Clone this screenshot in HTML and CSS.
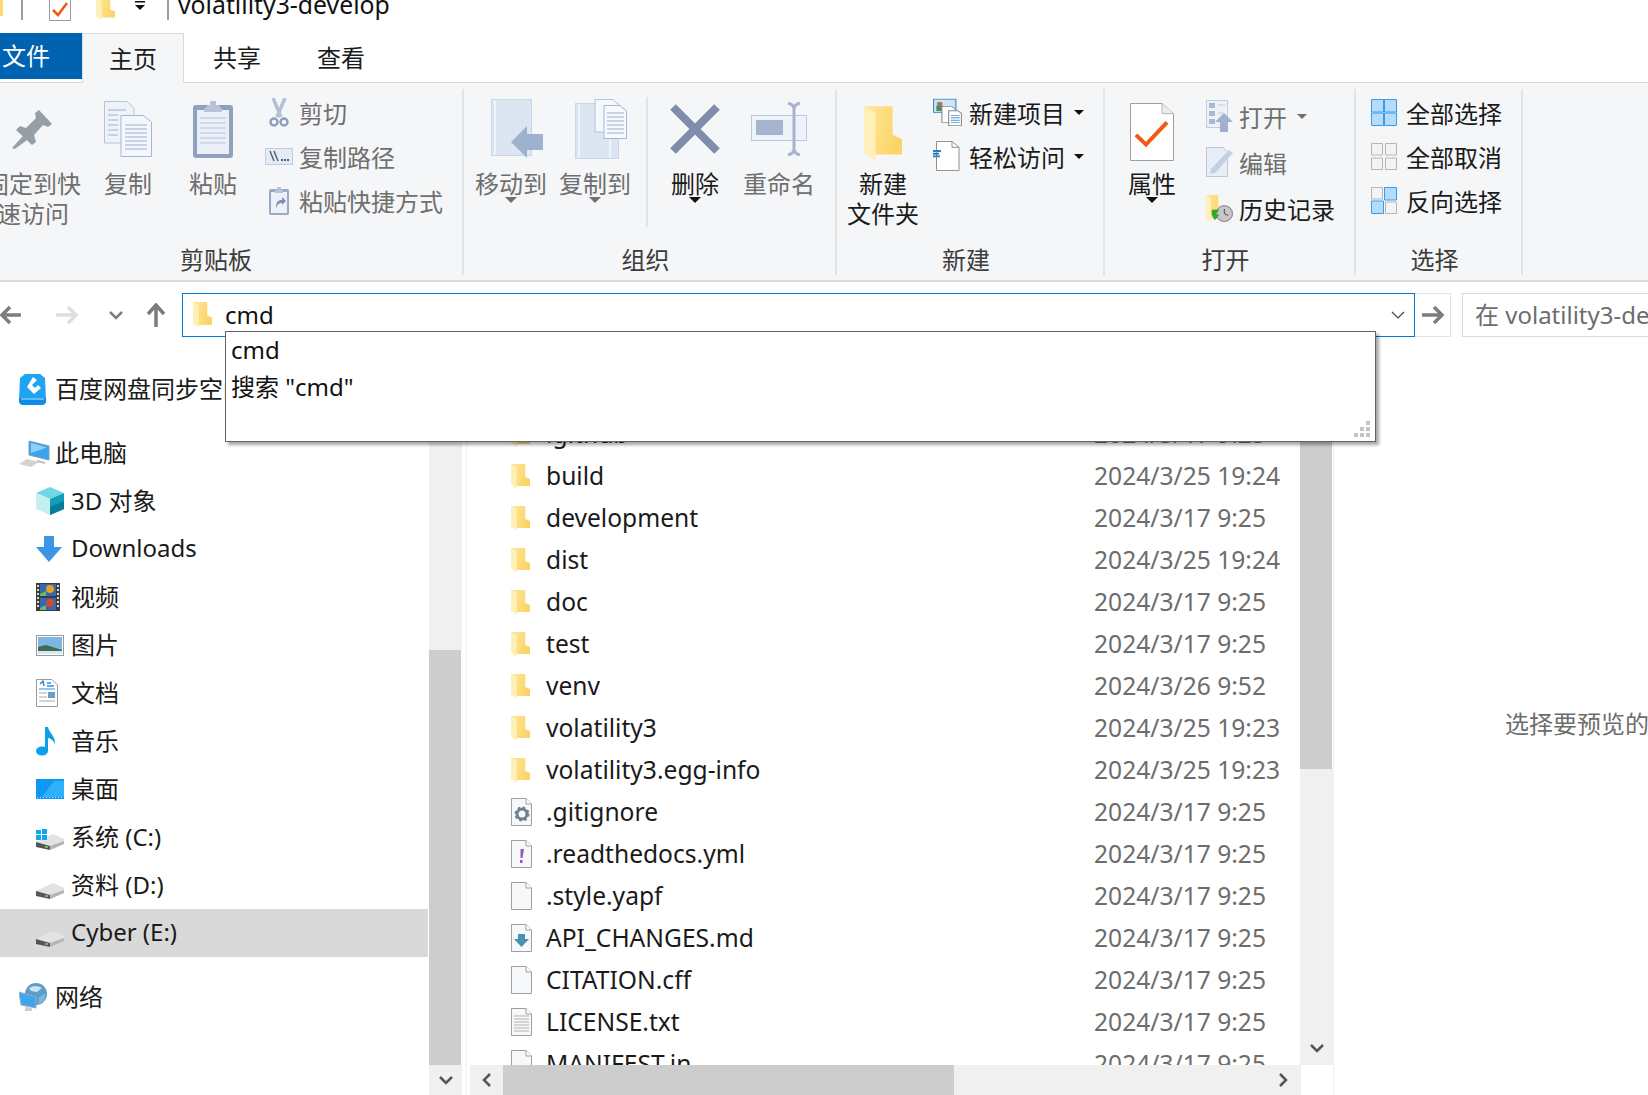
FILE: index.html
```html
<!DOCTYPE html>
<html lang="zh-CN">
<head>
<meta charset="utf-8">
<title>volatility3-develop</title>
<link rel="stylesheet" href="styles.css">
</head>
<body>
<svg class="defs" aria-hidden="true">
  <defs>
    <linearGradient id="fy" x1="0" y1="0" x2="1" y2="0.3"><stop offset="0" stop-color="#ffe89c"/><stop offset="1" stop-color="#fbd467"/></linearGradient>
    <symbol id="folder" viewBox="0 0 20 26" preserveAspectRatio="none">
      <path d="M0 1H15V14L20 16V23H5Z" fill="url(#fy)"/>
      <path d="M0 1L6 4V26L0 22Z" fill="#fff0ba"/>
    </symbol>
    <symbol id="page" viewBox="0 0 21 28">
      <path d="M.5.5H15L20.500 6V27.500H.5Z" fill="#f6f8fa" stroke="#a0a0a0"/>
      <path d="M15 .5V6H20.500" fill="#fff" stroke="#a0a0a0"/>
    </symbol>
    <symbol id="drive" viewBox="0 0 28 16">
      <path d="M0 8L17 0L28 5V10L14 16L0 12Z" fill="#e3e3e3"/>
      <path d="M0 8L14 12V16L0 13Z" fill="#555"/>
      <path d="M14 12L28 7V10L14 16Z" fill="#b5b5b5"/>
      <rect x="9" y="12" width="3" height="2" fill="#5fc25f"/>
    </symbol>
  </defs>
</svg>

<div class="app">
  <div class="titlebar">
    <span class="tb-stub"></span>
    <span class="tb-sep tb-sep-a"></span>
    <svg class="tb-check" width="22" height="21" viewBox="0 0 22 21"><path d="M.5-2H21.500V20.500H.5Z" fill="#fff" stroke="#9a9a9a"/><path d="M4 10L9 15L18 3" fill="none" stroke="#ef5a1c" stroke-width="2.500"/></svg>
    <svg class="tb-folder" width="19" height="22"><use href="#folder" width="19" height="22"/></svg>
    <svg class="tb-caret" width="16" height="12" viewBox="0 0 16 12"><rect x="2" y="1" width="10" height="1.500" fill="#111"/><path d="M2 5H12L7 10Z" fill="#111"/></svg>
    <span class="tb-sep tb-sep-b"></span>
    <span class="tb-title">volatility3-develop</span>
  </div>

  <div class="tabs">
    <div class="tab-file">文件</div>
    <div class="tab tab-active">主页</div>
    <div class="tab tab-share">共享</div>
    <div class="tab tab-view">查看</div>
  </div>

  <div class="ribbon">
    <section class="group group-clip">
      <div class="group-body">
        <div class="big big-pin dim">
          <div class="big-icon">
            <svg width="42" height="42" viewBox="0 0 42 42"><path d="M27 2L40 16L36 19L31 17L22 27L24 34L20 37L4 22L8 18L14 20L24 10L23 5Z" fill="#95a0a6"/><path d="M11 28L15 32L3 41L0 40Z" fill="#95a0a6"/></svg>
          </div>
          <div class="big-label">固定到快<br>速访问</div>
        </div>
        <div class="big big-copy dim">
          <div class="big-icon">
            <svg width="48" height="56" viewBox="0 0 48 56"><path d="M.5.500H23L30 7V42H.5Z" fill="#eef2f9" stroke="#b4c2da"/><path d="M17 14.500H39L47.500 21V55.500H17Z" fill="#f4f7fc" stroke="#a5b6d2"/><path d="M4 9H22M4 14H14M4 19H14M4 24H14M4 29H14M4 34H14M21 24H43M21 28H43M21 32H43M21 36H43M21 40H43M21 44H43M21 48H43" stroke="#b9c6dd" stroke-width="1.500"/></svg>
          </div>
          <div class="big-label">复制</div>
        </div>
        <div class="big big-paste dim">
          <div class="big-icon">
            <svg width="40" height="58" viewBox="0 0 40 58"><rect y="5" width="40" height="53" rx="3" fill="#8fa1bf"/><rect x="4" y="10" width="32" height="44" fill="#eaeff8"/><path d="M7 18H33M7 23H33M7 28H33M7 33H33M7 38H33M7 43H33" stroke="#c9d4e6" stroke-width="1.500"/><path d="M11 9L15 5H17V1H23V5H25L29 9V12H11Z" fill="#b7c3d7"/></svg>
          </div>
          <div class="big-label">粘贴</div>
        </div>
        <div class="stack stack-clip dim">
          <div class="small">
            <span class="small-icon"><svg width="20" height="29" viewBox="0 0 20 29"><path d="M4 0L12 19M16 0L8 19" stroke="#b3c0d4" stroke-width="3.500"/><circle cx="5" cy="24" r="3.500" fill="none" stroke="#8d9fbd" stroke-width="2.500"/><circle cx="15" cy="24" r="3.500" fill="none" stroke="#8d9fbd" stroke-width="2.500"/></svg></span>
            <span>剪切</span>
          </div>
          <div class="small">
            <span class="small-icon"><svg width="28" height="17" viewBox="0 0 28 17"><rect x=".5" y=".5" width="27" height="16" fill="#e3ebf6" stroke="#c0cde0"/><path d="M5 3L9 13M9 3L13 13" stroke="#55637a" stroke-width="1.500"/><path d="M16 12H24" stroke="#55637a" stroke-width="2" stroke-dasharray="2 1"/></svg></span>
            <span>复制路径</span>
          </div>
          <div class="small">
            <span class="small-icon"><svg width="20" height="29" viewBox="0 0 20 29"><rect y="3" width="20" height="26" rx="2" fill="#9aaac5"/><rect x="2" y="6" width="16" height="21" fill="#edf1f8"/><path d="M6 5L8 3V1H12V3L14 5V7H6Z" fill="#b7c3d7"/><path d="M7 22C7 16 9 14 13 14V11L17 15L13 19V17C10 17 9 18 7 22Z" fill="#7b90b3"/></svg></span>
            <span>粘贴快捷方式</span>
          </div>
        </div>
      </div>
      <div class="group-label group-label-clip">剪贴板</div>
    </section>

    <section class="group group-org">
      <div class="group-body">
        <div class="big big-w3 dim">
          <div class="big-icon big-icon-shift">
            <svg width="52" height="60" viewBox="0 0 52 60"><rect x=".5" y=".5" width="40" height="56" fill="#dce6f3" stroke="#c8d6e9"/><path d="M4 1V56" stroke="#eef3fa" stroke-width="2"/><path d="M20 43L36 27V35H52V51H36V59Z" fill="#9fb1cc"/></svg>
          </div>
          <div class="big-label">移动到</div>
          <span class="caret caret-dim"></span>
        </div>
        <div class="big big-w3 big-copyto dim">
          <div class="big-icon big-icon-shift">
            <svg width="52" height="60" viewBox="0 0 52 60"><rect x=".5" y="4.500" width="43" height="55" fill="#dce6f3" stroke="#c8d6e9"/><path d="M4 5V59M35 33V59" stroke="#eef3fa" stroke-width="2"/><path d="M20 .5H38L44 6V33H20Z" fill="#f4f7fc" stroke="#b4c2da"/><path d="M29 6.500H45L51.500 12V39.500H29Z" fill="#f7f9fd" stroke="#a5b6d2"/><path d="M32 14H49M32 18H49M32 22H49M32 26H49M32 30H49M32 34H49" stroke="#b9c6dd" stroke-width="1.500"/></svg>
          </div>
          <div class="big-label">复制到</div>
          <span class="caret caret-dim"></span>
        </div>
        <span class="vsep"></span>
        <div class="big big-del">
          <div class="big-icon">
            <svg width="50" height="50" viewBox="0 0 50 50"><path d="M3 3L47 47M47 3L3 47" stroke="#7f8daa" stroke-width="8"/></svg>
          </div>
          <div class="big-label">删除</div>
          <span class="caret"></span>
        </div>
        <div class="big big-w3 big-rename dim">
          <div class="big-icon">
            <svg width="56" height="54" viewBox="0 0 56 54"><rect x=".5" y="13.500" width="55" height="25" fill="#eef2fa" stroke="#b9c8de"/><rect x="5" y="18" width="27" height="15" fill="#a6b5cf"/><path d="M37 1C41 2 43 4 43 7V47C43 50 41 52 37 53M49 1C45 2 43 4 43 7M43 47C43 50 45 52 49 53" fill="none" stroke="#a6b5cf" stroke-width="3"/></svg>
          </div>
          <div class="big-label">重命名</div>
        </div>
      </div>
      <div class="group-label">组织</div>
    </section>

    <section class="group group-new">
      <div class="group-body">
        <div class="big big-w3 big-newf">
          <div class="big-icon big-icon-top">
            <svg width="38" height="57"><use href="#folder" width="38" height="57"/></svg>
          </div>
          <div class="big-label">新建<br>文件夹</div>
        </div>
        <div class="stack stack-new">
          <div class="small">
            <span class="small-icon"><svg width="29" height="28" viewBox="0 0 26 34" preserveAspectRatio="none"><rect x=".5" y="1.500" width="20" height="16" fill="#cfe4f7" stroke="#3f88c5"/><circle cx="6" cy="7" r="2.500" fill="#a8795a"/><rect x="3" y="9" width="6" height="7" fill="#4d8a5f"/><path d="M8 10.500H17L20 13V29.500H8Z" fill="#fff" stroke="#8d8d8d"/><path d="M14 15.500H22L25.500 18.500V33.500H14Z" fill="#fff" stroke="#8d8d8d"/><path d="M16 21H24M16 24H24M16 27H24M16 30H24" stroke="#4a90d9"/></svg></span>
            <span>新建项目</span><span class="caret-inline"></span>
          </div>
          <div class="small">
            <span class="small-icon"><svg width="27" height="30" viewBox="0 0 27 33" preserveAspectRatio="none"><path d="M3.500.500H19L26 7V32.500H3.500Z" fill="#fff" stroke="#8a8a8a"/><path d="M19 .5V7H26" fill="none" stroke="#8a8a8a"/><path d="M0 11H8M0 14H6M0 17H7" stroke="#2c7cc4" stroke-width="2"/></svg></span>
            <span>轻松访问</span><span class="caret-inline"></span>
          </div>
        </div>
      </div>
      <div class="group-label">新建</div>
    </section>

    <section class="group group-open">
      <div class="group-body">
        <div class="big big-prop">
          <div class="big-icon big-icon-prop">
            <svg width="44" height="58" viewBox="0 0 44 60" preserveAspectRatio="none"><path d="M.5.500H32L43.500 11V59.500H.5Z" fill="#fff" stroke="#9d9d9d"/><path d="M32 .5V11H43.500" fill="#eee" stroke="#b5b5b5"/><path d="M6 33L16 43L37 20" fill="none" stroke="#f05a14" stroke-width="4"/></svg>
          </div>
          <div class="big-label">属性</div>
          <span class="caret"></span>
        </div>
        <div class="stack stack-open">
          <div class="small dim">
            <span class="small-icon"><svg width="27" height="32" viewBox="0 0 27 32"><rect x=".5" y=".5" width="21" height="27" fill="#edf1f8" stroke="#c0cde0"/><rect x="3" y="3" width="6" height="5" fill="#a9b8d0"/><rect x="3" y="11" width="6" height="5" fill="#a9b8d0"/><rect x="3" y="19" width="6" height="5" fill="#a9b8d0"/><path d="M12 5H19M12 13H17" stroke="#c0cde0"/><path d="M18 13L27 22H22V32H14V22H9Z" fill="#9fb1cc"/></svg></span>
            <span>打开</span><span class="caret-inline caret-inline-dim"></span>
          </div>
          <div class="small dim">
            <span class="small-icon"><svg width="27" height="30" viewBox="0 0 27 30"><path d="M.5.500H17L21.500 5V29.500H.5Z" fill="#e8eef8" stroke="#b9c8de"/><path d="M23 3L27 6L9 26L4 27L5 22Z" fill="#c3cfe2"/></svg></span>
            <span>编辑</span>
          </div>
          <div class="small">
            <span class="small-icon"><svg width="27" height="28" viewBox="0 0 28 30" preserveAspectRatio="none"><use href="#folder" width="17" height="30"/><circle cx="19" cy="21" r="8.500" fill="#c7c7c7" stroke="#777"/><path d="M19 16V21L23 23" fill="none" stroke="#444"/><path d="M6 17L14 17L10 22H14L9 28L6 22Z" fill="#2fa62f"/></svg></span>
            <span>历史记录</span>
          </div>
        </div>
      </div>
      <div class="group-label">打开</div>
    </section>

    <section class="group group-sel">
      <div class="group-body">
        <div class="stack stack-sel">
          <div class="small">
            <span class="small-icon"><svg width="26" height="27" viewBox="0 0 26 27"><path d="M.5.500H12.500V13H.5ZM13.500.500H25.500V13H13.500ZM.5 14H12.500V26.500H.5ZM13.500 14H25.500V26.500H13.500Z" fill="#b6dcfb" stroke="#3a9bea"/></svg></span>
            <span>全部选择</span>
          </div>
          <div class="small">
            <span class="small-icon"><svg width="26" height="27" viewBox="0 0 26 27"><path d="M.5.500H11.500V12H.5ZM14.500.500H25.500V12H14.500ZM.5 15H11.500V26.500H.5ZM14.500 15H25.500V26.500H14.500Z" fill="#f2f3f4" stroke="#b5b5b5"/></svg></span>
            <span>全部取消</span>
          </div>
          <div class="small">
            <span class="small-icon"><svg width="26" height="27" viewBox="0 0 26 27"><path d="M.5.500H11.500V12H.5ZM14.500 15H25.500V26.500H14.500Z" fill="#f2f3f4" stroke="#b5b5b5"/><path d="M13.500.500H25.500V13H13.500ZM.5 14H12.500V26.500H.5Z" fill="#b6dcfb" stroke="#3a9bea"/></svg></span>
            <span>反向选择</span>
          </div>
        </div>
      </div>
      <div class="group-label">选择</div>
    </section>
  </div>

  <div class="addr">
    <svg class="ab-back" width="22" height="22" viewBox="0 0 22 22"><path d="M10 3L2 11L10 19M2 11H21" fill="none" stroke="#7d7d7d" stroke-width="3.500"/></svg>
    <svg class="ab-fwd" width="24" height="22" viewBox="0 0 24 22"><path d="M13 3L21 11L13 19M21 11H1" fill="none" stroke="#dedede" stroke-width="3.500"/></svg>
    <svg class="ab-down" width="14" height="10" viewBox="0 0 14 10"><path d="M1 2L7 8L13 2" fill="none" stroke="#7d7d7d" stroke-width="2.500"/></svg>
    <svg class="ab-up" width="20" height="24" viewBox="0 0 20 24"><path d="M2 11L10 2L18 11M10 2V24" fill="none" stroke="#7d7d7d" stroke-width="3.500"/></svg>
    <div class="addr-box">
      <svg class="addr-folder" width="19" height="27"><use href="#folder" width="19" height="27"/></svg>
      <span class="addr-text">cmd</span>
      <svg class="addr-chev" width="14" height="8" viewBox="0 0 14 8"><path d="M1 1L7 7L13 1" fill="none" stroke="#444" stroke-width="1.200"/></svg>
    </div>
    <div class="addr-go">
      <svg width="24" height="20" viewBox="0 0 24 20"><path d="M13 2L21 10L13 18M21 10H1" fill="none" stroke="#7d7d7d" stroke-width="3.500"/></svg>
    </div>
    <div class="search">在 volatility3-develop 中搜索</div>
  </div>

  <div class="main">
    <nav class="nav">
      <div class="nav-row nav-root">
        <span class="nav-icon"><svg width="27" height="31" viewBox="0 0 27 31"><path d="M6 0H21L26 4L27 26Q27 31 22 31H5Q0 31 0 26L1 4Z" fill="#1fa4f4"/><path d="M0 24H27V27Q27 31 22 31H5Q0 31 0 27Z" fill="#0d8de6"/><path d="M2 25H25" stroke="#bfe6ff"/><path d="M14 3L18 6L13 11L16 14L19 11L22 14L15 20L8 13Z" fill="#fff"/></svg></span>
        <span class="nav-text">百度网盘同步空间</span>
      </div>
      <div class="nav-row nav-root nav-gap">
        <span class="nav-icon"><svg width="31" height="27" viewBox="0 0 31 27"><path d="M10 1L30 6V20L10 15Z" fill="#39a4ee" stroke="#7f9fb5"/><path d="M12 3L28 7.500L12 13Z" fill="#8fd0fa"/><path d="M18 20L26 22V24L18 22Z" fill="#bbb"/><path d="M0 24L8 19L20 22L12 27Z" fill="#d3d3d3"/></svg></span>
        <span class="nav-text">此电脑</span>
      </div>
      <div class="nav-row nav-child">
        <span class="nav-icon"><svg width="28" height="28" viewBox="0 0 28 28"><path d="M14 0L28 6L14 12L0 6Z" fill="#6fd8e4"/><path d="M0 6L14 12V28L0 22Z" fill="#c5f0ef"/><path d="M14 12L28 6V22L14 28Z" fill="#129dbb"/><path d="M14 20L28 14V22L14 28Z" fill="#0b7c98"/></svg></span>
        <span class="nav-text">3D 对象</span>
      </div>
      <div class="nav-row nav-child">
        <span class="nav-icon"><svg width="26" height="26" viewBox="0 0 26 26"><path d="M8 0H18V11H26L13 26L0 11H8Z" fill="#3b97e6"/></svg></span>
        <span class="nav-text">Downloads</span>
      </div>
      <div class="nav-row nav-child">
        <span class="nav-icon"><svg width="24" height="28" viewBox="0 0 24 28"><rect width="24" height="28" fill="#3c3c3c"/><rect x="4" y="1" width="16" height="12" fill="#3268b5"/><rect x="4" y="15" width="16" height="12" fill="#3268b5"/><circle cx="14" cy="6" r="4" fill="#e9a11f"/><circle cx="14" cy="20" r="4" fill="#d9482b"/><path d="M4 11L10 8V13H4ZM4 25L10 22V27H4Z" fill="#6dbb5a"/><path d="M1 3H3M1 7H3M1 11H3M1 15H3M1 19H3M1 23H3M21 3H23M21 7H23M21 11H23M21 15H23M21 19H23M21 23H23" stroke="#ddd" stroke-width="2"/></svg></span>
        <span class="nav-text">视频</span>
      </div>
      <div class="nav-row nav-child">
        <span class="nav-icon"><svg width="28" height="21" viewBox="0 0 28 21"><rect x=".5" y=".5" width="27" height="20" fill="#fff" stroke="#9a9a9a"/><rect x="2" y="2" width="24" height="17" fill="#7bb7e2"/><path d="M2 12L10 10L26 15V19H2Z" fill="#3f6b52"/><path d="M2 16H26V19H2Z" fill="#d6eaf5"/></svg></span>
        <span class="nav-text">图片</span>
      </div>
      <div class="nav-row nav-child">
        <span class="nav-icon"><svg width="22" height="28" viewBox="0 0 22 28"><path d="M.5.500H16L21.500 6V27.500H.5Z" fill="#fff" stroke="#9a9a9a"/><path d="M4 5L7 2L8 7M11 4H15M11 7H18" fill="none" stroke="#2c8fe0" stroke-width="1.500"/><path d="M3 10H19" stroke="#2c8fe0"/><path d="M3 14H11M3 18H11M3 22H19" stroke="#aaa"/><rect x="12" y="13" width="7" height="6" fill="#6ba0c4"/></svg></span>
        <span class="nav-text">文档</span>
      </div>
      <div class="nav-row nav-child">
        <span class="nav-icon"><svg width="20" height="29" viewBox="0 0 20 29"><ellipse cx="6" cy="24" rx="6" ry="4.500" fill="#0aa0ea"/><path d="M9 0H12C13 6 20 9 19 18C18.500 14 15 11.500 12 11V24H9Z" fill="#0aa0ea"/></svg></span>
        <span class="nav-text">音乐</span>
      </div>
      <div class="nav-row nav-child">
        <span class="nav-icon"><svg width="28" height="20" viewBox="0 0 28 20"><rect width="28" height="20" fill="#0f97f5"/><path d="M6 18L18 2H28V18Z" fill="#2fb0fb"/><path d="M1 18.500H27" stroke="#cdeaff" stroke-dasharray="1 2"/></svg></span>
        <span class="nav-text">桌面</span>
      </div>
      <div class="nav-row nav-child">
        <span class="nav-icon nav-icon-c">
          <svg width="28" height="21" viewBox="0 0 28 21"><use href="#drive" y="5" width="28" height="16"/><path d="M0 1H5V5H0ZM6 0H11V5H6ZM0 6H5V11H0ZM6 6H11V11H6Z" fill="#0fa8ee"/></svg>
        </span>
        <span class="nav-text">系统 (C:)</span>
      </div>
      <div class="nav-row nav-child">
        <span class="nav-icon nav-icon-d"><svg width="28" height="16"><use href="#drive" width="28" height="16"/></svg></span>
        <span class="nav-text">资料 (D:)</span>
      </div>
      <div class="nav-row nav-child nav-selected">
        <span class="nav-icon nav-icon-d"><svg width="28" height="16"><use href="#drive" width="28" height="16"/></svg></span>
        <span class="nav-text">Cyber (E:)</span>
      </div>
      <div class="nav-row nav-root nav-gap">
        <span class="nav-icon"><svg width="28" height="28" viewBox="0 0 28 28"><circle cx="17" cy="11" r="11" fill="#5a9ccc"/><path d="M10 5Q17 1 23 5L18 9L12 8Z" fill="#cfe4f2"/><path d="M20 14L27 10L25 18L19 21Z" fill="#7fb6dc"/><path d="M0 9L17 14V25L2 22Z" fill="#3da7ee" stroke="#9ab"/><path d="M6 24L13 25V28H6Z" fill="#ccc"/></svg></span>
        <span class="nav-text">网络</span>
      </div>
    </nav>

    <div class="vbar vbar-nav">
      <div class="vbar-track vbar-track-nav"></div>
      <div class="vbar-thumb"></div>
      <div class="vbar-btn"><svg width="14" height="9" viewBox="0 0 14 9"><path d="M1 1L7 7L13 1" fill="none" stroke="#555" stroke-width="2.500"/></svg></div>
    </div>

    <div class="split"></div>

    <div class="content">
      <div class="content-top">
        <div class="list">
          <div class="row"><span class="r-icon"><svg width="19" height="26"><use href="#folder" width="19" height="26"/></svg></span><span class="r-name">.github</span><span class="r-date">2024/3/17 9:25</span></div>
          <div class="row"><span class="r-icon"><svg width="19" height="26"><use href="#folder" width="19" height="26"/></svg></span><span class="r-name">build</span><span class="r-date">2024/3/25 19:24</span></div>
          <div class="row"><span class="r-icon"><svg width="19" height="26"><use href="#folder" width="19" height="26"/></svg></span><span class="r-name">development</span><span class="r-date">2024/3/17 9:25</span></div>
          <div class="row"><span class="r-icon"><svg width="19" height="26"><use href="#folder" width="19" height="26"/></svg></span><span class="r-name">dist</span><span class="r-date">2024/3/25 19:24</span></div>
          <div class="row"><span class="r-icon"><svg width="19" height="26"><use href="#folder" width="19" height="26"/></svg></span><span class="r-name">doc</span><span class="r-date">2024/3/17 9:25</span></div>
          <div class="row"><span class="r-icon"><svg width="19" height="26"><use href="#folder" width="19" height="26"/></svg></span><span class="r-name">test</span><span class="r-date">2024/3/17 9:25</span></div>
          <div class="row"><span class="r-icon"><svg width="19" height="26"><use href="#folder" width="19" height="26"/></svg></span><span class="r-name">venv</span><span class="r-date">2024/3/26 9:52</span></div>
          <div class="row"><span class="r-icon"><svg width="19" height="26"><use href="#folder" width="19" height="26"/></svg></span><span class="r-name">volatility3</span><span class="r-date">2024/3/25 19:23</span></div>
          <div class="row"><span class="r-icon"><svg width="19" height="26"><use href="#folder" width="19" height="26"/></svg></span><span class="r-name">volatility3.egg-info</span><span class="r-date">2024/3/25 19:23</span></div>
          <div class="row"><span class="r-icon"><svg width="21" height="28" viewBox="0 0 21 28"><use href="#page" width="21" height="28"/><circle cx="11" cy="16" r="5" fill="none" stroke="#6d808c" stroke-width="3"/><circle cx="11" cy="16" r="6.500" fill="none" stroke="#6d808c" stroke-width="2" stroke-dasharray="2.500 2.600"/></svg></span><span class="r-name">.gitignore</span><span class="r-date">2024/3/17 9:25</span></div>
          <div class="row"><span class="r-icon"><svg width="21" height="28" viewBox="0 0 21 28"><use href="#page" width="21" height="28"/><path d="M9.500 9H13L11.500 18H9.500ZM9 20H11.500V23H9Z" fill="#8f5bb5"/></svg></span><span class="r-name">.readthedocs.yml</span><span class="r-date">2024/3/17 9:25</span></div>
          <div class="row"><span class="r-icon"><svg width="21" height="28"><use href="#page" width="21" height="28"/></svg></span><span class="r-name">.style.yapf</span><span class="r-date">2024/3/17 9:25</span></div>
          <div class="row"><span class="r-icon"><svg width="21" height="28" viewBox="0 0 21 28"><use href="#page" width="21" height="28"/><path d="M7 10H14V15H18L10.500 23L3 15H7Z" fill="#4a90b5"/></svg></span><span class="r-name">API_CHANGES.md</span><span class="r-date">2024/3/17 9:25</span></div>
          <div class="row"><span class="r-icon"><svg width="21" height="28"><use href="#page" width="21" height="28"/></svg></span><span class="r-name">CITATION.cff</span><span class="r-date">2024/3/17 9:25</span></div>
          <div class="row"><span class="r-icon"><svg width="21" height="28" viewBox="0 0 21 28"><use href="#page" width="21" height="28"/><path d="M3 8H18M3 11H18M3 14H18M3 17H18M3 20H18M3 23H18" stroke="#b0b0b0"/></svg></span><span class="r-name">LICENSE.txt</span><span class="r-date">2024/3/17 9:25</span></div>
          <div class="row"><span class="r-icon"><svg width="21" height="28"><use href="#page" width="21" height="28"/></svg></span><span class="r-name">MANIFEST.in</span><span class="r-date">2024/3/17 9:25</span></div>
        </div>
        <div class="vbar vbar-list">
          <div class="vbar-thumb vbar-thumb-list"></div>
          <div class="vbar-track"></div>
          <div class="vbar-btn vbar-btn-list"><svg width="14" height="9" viewBox="0 0 14 9"><path d="M1 1L7 7L13 1" fill="none" stroke="#555" stroke-width="2.500"/></svg></div>
        </div>
      </div>
      <div class="hbar">
        <div class="hbar-btn"><svg width="9" height="14" viewBox="0 0 9 14"><path d="M8 1L2 7L8 13" fill="none" stroke="#555" stroke-width="2.500"/></svg></div>
        <div class="hbar-thumb"></div>
        <div class="hbar-track"></div>
        <div class="hbar-btn hbar-btn-right"><svg width="9" height="14" viewBox="0 0 9 14"><path d="M1 1L7 7L1 13" fill="none" stroke="#555" stroke-width="2.500"/></svg></div>
      </div>
    </div>

    <div class="preview">
      <p class="preview-text">选择要预览的文件。</p>
    </div>
  </div>

  <div class="popup">
    <div class="popup-row">cmd</div>
    <div class="popup-row">搜索 "cmd"</div>
    <svg class="grip" width="17" height="16" viewBox="0 0 17 16"><path d="M12 0H16V4H12ZM6 6H10V10H6ZM12 6H16V10H12ZM0 12H4V16H0ZM6 12H10V16H6ZM12 12H16V16H12Z" fill="#c4c4c4"/></svg>
  </div>
</div>
</body>
</html>
```

FILE: styles.css
```css
* { box-sizing: border-box; }
html, body { margin: 0; padding: 0; background: #fff; }
body { font-family: "Noto Sans", "Noto Sans CJK SC", sans-serif; font-size: 24px; color: #1a1a1a; }
.defs { position: absolute; width: 0; height: 0; }
svg { display: block; flex: none; }

.app { position: relative; width: 1648px; height: 1095px; overflow: hidden; display: flex; flex-direction: column; }

/* title bar */
.titlebar { height: 33px; flex: none; display: flex; align-items: flex-start; overflow: hidden; }
.tb-stub { width: 3px; height: 16px; background: #fcd870; }
.tb-sep { width: 2px; height: 20px; background: #9d9d9d; }
.tb-sep-a { margin-left: 18px; }
.tb-check { margin-left: 26px; }
.tb-folder { margin-left: 25px; margin-top: -2px; }
.tb-caret { margin-left: 18px; }
.tb-sep-b { margin-left: 18px; }
.tb-title { margin-left: 9px; font-size: 24.800px; line-height: 24px; margin-top: -8px; color: #111; white-space: nowrap; }

/* tabs */
.tabs { height: 50px; flex: none; display: flex; align-items: flex-start; border-bottom: 1px solid #dadbdc; }
.tab-file { width: 82px; height: 46px; background: #0063b1; color: #fff; padding-left: 2px; line-height: 46px; }
.tab { height: 50px; line-height: 50px; }
.tab-active { width: 102px; text-align: center; background: #f5f6f7; border: 1px solid #dadbdc; border-bottom: 0; }
.tab-share { margin-left: 29px; }
.tab-view { margin-left: 56px; }

/* ribbon */
.ribbon { height: 199px; flex: none; display: flex; padding-top: 6px; background: #f5f6f7; border-bottom: 2px solid #dadbdc; }
.group { height: 186px; flex: none; display: flex; flex-direction: column; border-right: 2px solid #e2e3e4; }
.group-clip { width: 484px; margin-left: -20px; }
.group-org { width: 373px; }
.group-new { width: 268px; }
.group-open { width: 251px; }
.group-sel { width: 167px; }
.group-body { height: 155px; flex: none; display: flex; }
.group-label { height: 31px; line-height: 31px; text-align: center; padding-right: 8px; color: #3c3c3c; }
.group-label-clip { padding-right: 10px; }

.big { flex: none; display: flex; flex-direction: column; align-items: center; }
.big-icon { height: 80px; flex: none; display: flex; align-items: center; justify-content: center; }
.big-icon-top { align-items: flex-start; padding-top: 15px; }
.big-icon-prop { padding-top: 5px; }
.big-icon-shift { padding-left: 12px; }
.big-label { line-height: 30px; text-align: center; white-space: nowrap; }
.dim { color: #6f6f6f; }

.big-pin { width: 96px; margin-left: 5px; }
.big-copy { width: 48px; margin-left: 23px; }
.big-paste { width: 48px; margin-left: 37px; }
.big-w3 { width: 72px; }
.group-org .big-w3:first-child { margin-left: 11px; }
.big-copyto { margin-left: 12px; }
.vsep { width: 2px; height: 130px; margin: 8px 0 0 15px; background: #e2e3e4; flex: none; }
.big-del { width: 48px; margin-left: 23px; }
.big-rename { margin-left: 24px; }
.big-newf { margin-left: 10px; }
.big-prop { width: 48px; margin-left: 23px; }

.stack { display: flex; flex-direction: column; padding-top: 1px; flex: none; }
.small { height: 44px; display: flex; align-items: center; white-space: nowrap; }
.small-icon { width: 36px; flex: none; display: flex; justify-content: center; }
.stack-clip { margin-left: 25px; }
.stack-clip .small-icon { width: 37px; padding-right: 3px; }
.stack-new { margin-left: 14px; }
.stack-new .small-icon { justify-content: flex-start; }
.stack-open { margin-left: 30px; padding-top: 4px; }
.stack-open .small { height: 46px; }
.stack-open .small-icon { width: 33px; justify-content: flex-start; }
.stack-sel { margin-left: 15px; }
.stack-sel .small-icon { width: 35px; justify-content: flex-start; }

.caret { width: 0; height: 0; border-left: 6px solid transparent; border-right: 6px solid transparent; border-top: 6px solid #111; margin-top: -2px; }
.caret-dim { border-top-color: #6f6f6f; }
.caret-inline { width: 0; height: 0; margin-left: 9px; border-left: 5px solid transparent; border-right: 5px solid transparent; border-top: 5px solid #111; }
.caret-inline-dim { border-top-color: #6f6f6f; margin-left: 10px; }

/* address bar */
.addr { height: 63px; flex: none; display: flex; align-items: center; padding-top: 2px; }
.ab-back { margin-left: 0; }
.ab-fwd { margin-left: 33px; }
.ab-down { margin-left: 30px; }
.ab-up { margin-left: 23px; }
.addr-box { width: 1233px; height: 44px; flex: none; margin-left: 16px; border: 1px solid #0078d7; display: flex; align-items: center; padding-left: 10px; }
.addr-folder { margin-right: 13px; }
.addr-text { flex: 1; line-height: 42px; color: #111; }
.addr-chev { margin-right: 9px; }
.addr-go { width: 36px; height: 44px; flex: none; border: 1px solid #e3e3e3; border-left: 0; display: flex; align-items: center; justify-content: center; }
.search { width: 300px; height: 44px; margin-left: 11px; flex: none; border: 1px solid #d9d9d9; line-height: 42px; padding-left: 12px; color: #6d6d6d; white-space: nowrap; overflow: hidden; }

/* main */
.main { flex: 1; min-height: 0; display: flex; }
.nav { width: 429px; flex: none; padding-top: 20px; }
.nav-row { height: 48px; display: flex; align-items: center; white-space: nowrap; overflow: hidden; width: 428px; }
.nav-text { padding-bottom: 3px; }
.nav-root { padding-left: 19px; }
.nav-root .nav-icon { width: 36px; }
.nav-child { padding-left: 36px; }
.nav-child .nav-icon { width: 35px; }
.nav-gap { margin-top: 16px; }
.nav-icon { flex: none; display: flex; }
.nav-icon-c { padding-top: 4px; }
.nav-icon-d { padding-top: 12px; }
.nav-selected { background: #d9d9d9; }

.vbar { width: 33px; flex: none; display: flex; flex-direction: column; }
.vbar-track { flex: 1; background: #f0f0f0; }
.vbar-track-nav { flex: 1; }
.vbar-thumb { height: 415px; flex: none; background: #cdcdcd; margin-right: 1px; }
.vbar-btn { height: 30px; flex: none; background: #f0f0f0; display: flex; align-items: center; justify-content: center; }

.split { width: 8px; flex: none; background: linear-gradient(to right, #fff 4px, #f0f0f0 4px, #f0f0f0 5px, #fff 5px); }

.content { width: 863px; flex: none; display: flex; flex-direction: column; }
.content-top { flex: 1; min-height: 0; display: flex; }
.list { flex: 1; min-width: 0; overflow: hidden; padding-top: 68px; }
.row { height: 42px; display: flex; align-items: center; white-space: nowrap; font-size: 24.600px; }
.r-icon { width: 76px; flex: none; padding-left: 41px; display: flex; }
.r-name { width: 548px; flex: none; padding-bottom: 2px; }
.r-date { color: #6d6d6d; padding-bottom: 2px; }
.vbar-list { width: 33px; }
.vbar-thumb-list { height: 424px; flex: none; background: #cdcdcd; margin-right: 1px; }
.vbar-btn-list { height: 35px; padding-top: 2px; }

.hbar { height: 30px; flex: none; display: flex; width: 831px; background: #f0f0f0; }
.hbar-btn { width: 33px; flex: none; display: flex; align-items: center; justify-content: center; }
.hbar-thumb { width: 451px; flex: none; background: #cdcdcd; }
.hbar-track { flex: 1; }
.hbar-btn-right { width: 36px; }

.preview { flex: 1; min-width: 0; overflow: hidden; border-left: 1px solid #f0f0f0; padding-left: 171px; }
.preview-text { margin: 363px 0 0; line-height: 32px; color: #6d6d6d; white-space: nowrap; }

/* autocomplete popup */
.popup { position: absolute; left: 225px; top: 331px; width: 1151px; height: 111px; background: #fff; border: 1px solid #646464; box-shadow: 3px 3px 3px rgba(0,0,0,.35); padding-left: 5px; color: #111; }
.popup-row { height: 37px; line-height: 36px; }
.grip { position: absolute; right: 4px; bottom: 4px; }
```
